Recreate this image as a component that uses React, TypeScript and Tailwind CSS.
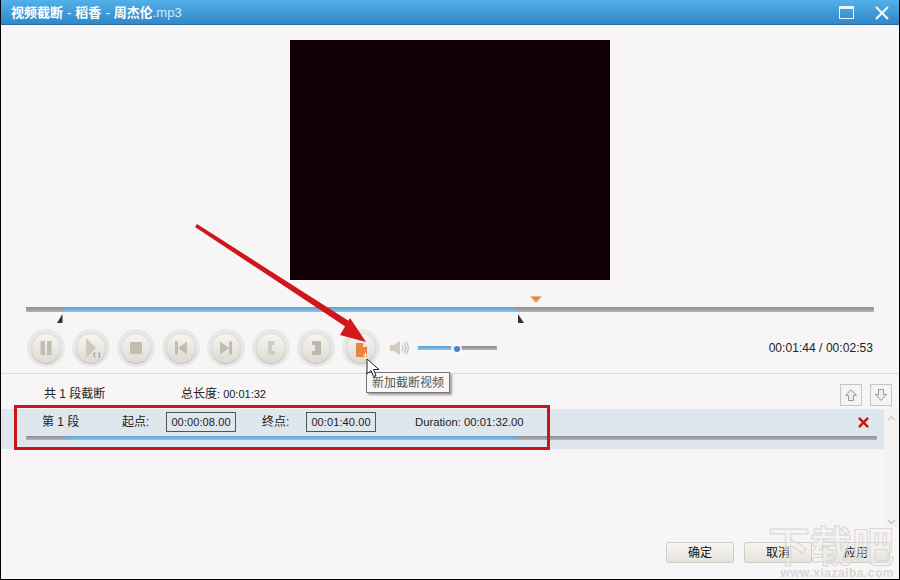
import type { ReactNode } from "react";

const FONT = "font-['Liberation_Sans','Noto_Sans_CJK_SC',sans-serif]";

function RoundButton({ children }: { children: ReactNode }) {
  return (
    <div className="flex h-[38px] w-[38px] shrink-0 items-center justify-center rounded-full bg-[#e9e8e8]">
      <div className="flex h-[30px] w-[30px] items-center justify-center rounded-full border border-[#dcdad5] bg-gradient-to-b from-[#f6f5f2] to-[#dedbd3] shadow-[0_1px_1px_rgba(0,0,0,0.2)]">
        <svg width="22" height="22" viewBox="0 0 22 22" fill="#c2bdb0">
          {children}
        </svg>
      </div>
    </div>
  );
}

function Track({ start, end, className }: { start: number; end: number; className: string }) {
  return (
    <div className={`relative rounded-[1px] bg-gradient-to-b from-[#8c8c8e] to-[#b4b4b6] ${className}`}>
      <div
        className="absolute inset-y-0 bg-gradient-to-b from-[#5e9fd0] to-[#8cc4ec]"
        style={{ left: start, width: end - start }}
      />
    </div>
  );
}

function TimeBox({ children }: { children: ReactNode }) {
  return (
    <div className="flex h-[20px] w-[70px] items-center justify-center border border-[#555] text-[11px] tracking-[0.1px] text-[#222]">
      {children}
    </div>
  );
}

function FooterButton({ children }: { children: ReactNode }) {
  return (
    <div className="flex h-[21px] w-[68px] items-center justify-center rounded-[2px] border border-[#cfcdc6] bg-gradient-to-b from-[#f5f4f0] to-[#e6e3db] text-[12px] text-[#111]">
      {children}
    </div>
  );
}

function ArrowButton({ down }: { down?: boolean }) {
  return (
    <div className="flex h-[22px] w-[22px] items-center justify-center border border-[#c6c6c6] bg-[#f4f4f4]">
      <svg width="14" height="14" viewBox="0 0 14 14" fill="#ececec" stroke="#9a9a9a">
        <path d={down ? "M4.5 1.5h5v5h3L7 12.5 1.5 6.5h3z" : "M4.5 12.5h5v-5h3L7 1.5 1.5 7.5h3z"} />
      </svg>
    </div>
  );
}

export default function App() {
  return (
    <div className={`relative flex h-[580px] w-[900px] flex-col overflow-hidden border-x border-b border-black bg-[#f7f5f6] ${FONT}`}>
      {/* title bar */}
      <div className="mx-[-1px] flex h-[25px] shrink-0 items-center justify-between bg-gradient-to-b from-[#52b0ea] to-[#2f86c6] pl-[11px] pr-[11px] shadow-[inset_0_-1px_0_#2a6f9f]">
        <span className="text-[13px] font-bold text-white">
          视频截断<span className="mx-[4px] font-normal">-</span>稻香<span className="mx-[4px] font-normal">-</span>周杰伦
          <span className="font-normal text-[#d5ecfb]">.mp3</span>
        </span>
        <div className="flex items-center gap-[21px]">
          <div className="h-[13px] w-[15px] border border-t-[3px] border-[#e8f5fd]" />
          <svg width="14" height="14" viewBox="0 0 14 14" stroke="#eef8fe" strokeWidth="2.2">
            <path d="M1 1l12 12M13 1L1 13" />
          </svg>
        </div>
      </div>

      {/* video */}
      <div className="flex justify-center pt-[15px]">
        <div className="h-[240px] w-[320px] bg-[#100003]" />
      </div>

      {/* seek bar */}
      <div className="relative mx-[25px] mt-[14px] h-[29px]">
        <svg className="absolute left-[504px] top-[2px]" width="12" height="7" viewBox="0 0 12 7">
          <path d="M0.500 0.500h11L6 6.500z" fill="#e98a3c" stroke="#d9b48c" strokeWidth="0.7" />
        </svg>
        <Track start={37} end={490} className="absolute inset-x-0 top-[13px] h-[5px] w-[848px]" />
        <svg className="absolute left-[31px] top-[20px]" width="6" height="9" viewBox="0 0 6 9">
          <path d="M5.500 0v9H0z" fill="#333" />
        </svg>
        <svg className="absolute left-[492px] top-[20px]" width="6" height="9" viewBox="0 0 6 9">
          <path d="M0 0v9h6z" fill="#333" />
        </svg>
      </div>

      {/* transport */}
      <div className="flex h-[50px] shrink-0 items-center px-[26px]">
        <div className="flex gap-[7px]">
          <RoundButton>
            <path d="M5.500 4h4.500v14H5.500zM12 4h4.500v14H12z" />
          </RoundButton>
          <RoundButton>
            <path d="M6 1l10 10-10 10z" fill="#cdc9bd" />
            <path d="M15.500 16h-1.500v4h1.500M18 16h1.500v4H18" fill="none" stroke="#888" strokeWidth="0.8" />
          </RoundButton>
          <RoundButton>
            <rect x="5" y="5" width="12" height="12" rx="1.500" />
          </RoundButton>
          <RoundButton>
            <path d="M5 4.500h3v13H5zM17 4.500v13l-9-6.500z" />
          </RoundButton>
          <RoundButton>
            <path d="M14 4.500h3v13h-3zM5 4.500v13l9-6.500z" />
          </RoundButton>
          <RoundButton>
            <path d="M8 4h7v4h-3v6h3v4H8z" fill="#d2cec3" />
          </RoundButton>
          <RoundButton>
            <path d="M7 4h9v14H7v-4h3V8H7z" fill="#bdb8aa" />
          </RoundButton>
          <RoundButton>
            <path d="M6 6h7l4 4v10H6z" fill="#ea8441" />
            <path d="M13 6l4 4h-4z" fill="#fbe3cf" />
            <path d="M15.500 15.500v5M13 18h5" stroke="#fff" strokeWidth="1" />
          </RoundButton>
        </div>
        <svg className="ml-[9px]" width="20" height="18" viewBox="0 0 20 18" fill="none">
          <path d="M1 6h4l6-4v14l-6-4H1z" fill="#cfcbc1" />
          <path d="M13 6q2 3 0 6M15 4q3.500 5 0 10M17 2.500q4.500 6.500 0 13" stroke="#c4c0b5" strokeWidth="1.300" />
        </svg>
        <div className="relative ml-[9px] w-[79px]">
          <Track start={0} end={39} className="h-[4px] w-[79px]" />
          <div className="absolute left-[33px] top-[-3px] flex h-[11px] w-[11px] items-center justify-center rounded-full bg-white/80">
            <div className="h-[6px] w-[6px] rounded-full bg-[#4a82bd]" />
          </div>
        </div>
        <div className="ml-auto text-[12px] tracking-[0.05px] text-[#222]">00:01:44 / 00:02:53</div>
      </div>

      <div className="h-px shrink-0 bg-[#dcdcdc]" />

      {/* summary row */}
      <div className="flex h-[35px] shrink-0 items-center pl-[43px] pr-[7px] pt-[5px] text-[12px] text-[#222]">
        <span className="w-[137px]">共 1 段截断</span>
        <span>
          总长度<span className="text-[11px]">: 00:01:32</span>
        </span>
        <div className="ml-auto mt-[2px] flex gap-[8px]">
          <ArrowButton />
          <ArrowButton down />
        </div>
      </div>

      {/* segment list */}
      <div className="flex min-h-0 flex-1">
        <div className="w-[883px] shrink-0">
          <div className="flex h-[40px] flex-col bg-[#dee7ee] pl-[25px] pr-[7px]">
            <div className="flex h-[26px] shrink-0 items-center text-[12px] text-[#222]">
              <span className="ml-[16px] w-[80px]">第 1 段</span>
              <span className="w-[44px]">起点:</span>
              <TimeBox>00:00:08.00</TimeBox>
              <span className="ml-[26px] w-[44px]">终点:</span>
              <TimeBox>00:01:40.00</TimeBox>
              <span className="ml-[39px] text-[11.3px]">Duration: 00:01:32.00</span>
              <svg className="ml-auto mr-[8px]" width="11" height="11" viewBox="0 0 12 12" stroke="#c0141a" strokeWidth="2.600">
                <path d="M1 1l10 10M11 1L1 11" />
              </svg>
            </div>
            <Track start={39} end={492} className="mt-[1px] h-[4px] w-[851px]" />
          </div>
        </div>
        <div className="flex h-[118px] w-[15px] shrink-0 flex-col justify-between bg-[#f3f3f3] pb-[2px] pl-[3px] pt-[6px]">
          <svg width="9" height="6" viewBox="0 0 9 6" fill="none" stroke="#cfcfcf" strokeWidth="1.500">
            <path d="M1 5l3.500-3.500L8 5" />
          </svg>
          <svg width="9" height="6" viewBox="0 0 9 6" fill="none" stroke="#c4c4c4" strokeWidth="1.500">
            <path d="M1 1l3.500 3.500L8 1" />
          </svg>
        </div>
      </div>

      {/* footer */}
      <div className="flex h-[37px] shrink-0 items-start justify-end gap-[10px] pr-[9px]">
        <FooterButton>确定</FooterButton>
        <FooterButton>取消</FooterButton>
        <FooterButton>应用</FooterButton>
      </div>

      {/* annotation overlays */}
      <div className="pointer-events-none absolute left-[13px] top-[405px] h-[45px] w-[536px] border-[3px] border-[#c8141c]" />
      <svg className="pointer-events-none absolute left-[-1px] top-0" width="900" height="580" viewBox="0 0 900 580">
        <path d="M197 224L352 323L349 329L195 227z" fill="#cf161b" />
        <path d="M366 342L340 335L350 318z" fill="#d4181c" />
      </svg>
      <div className="absolute left-[365px] top-[372px] flex h-[21px] w-[84px] items-center justify-center border border-[#777] bg-[#f7f7f7] text-[12px] text-[#555] shadow-[2px_2px_2px_rgba(0,0,0,0.35)]">
        新加截断视频
      </div>
      <svg className="absolute left-[365px] top-[358px]" width="14" height="21" viewBox="0 0 14 21">
        <path d="M1 1v15l4-3.500 2.500 6 2.500-1-2.500-6H13z" fill="#fff" stroke="#222" strokeWidth="1" />
      </svg>
      {/* watermark */}
      <div className="pointer-events-none absolute bottom-[1px] right-[5px] text-right">
        <div className="text-[42px] font-bold leading-none text-[#f4f2f0]/40 [-webkit-text-stroke:1px_#d9d7d4]">下载吧</div>
        <div className="text-[12px] font-bold leading-[9px] tracking-[0.5px] text-[#d9d7d4]">www.xiazaiba.com</div>
      </div>
    </div>
  );
}
